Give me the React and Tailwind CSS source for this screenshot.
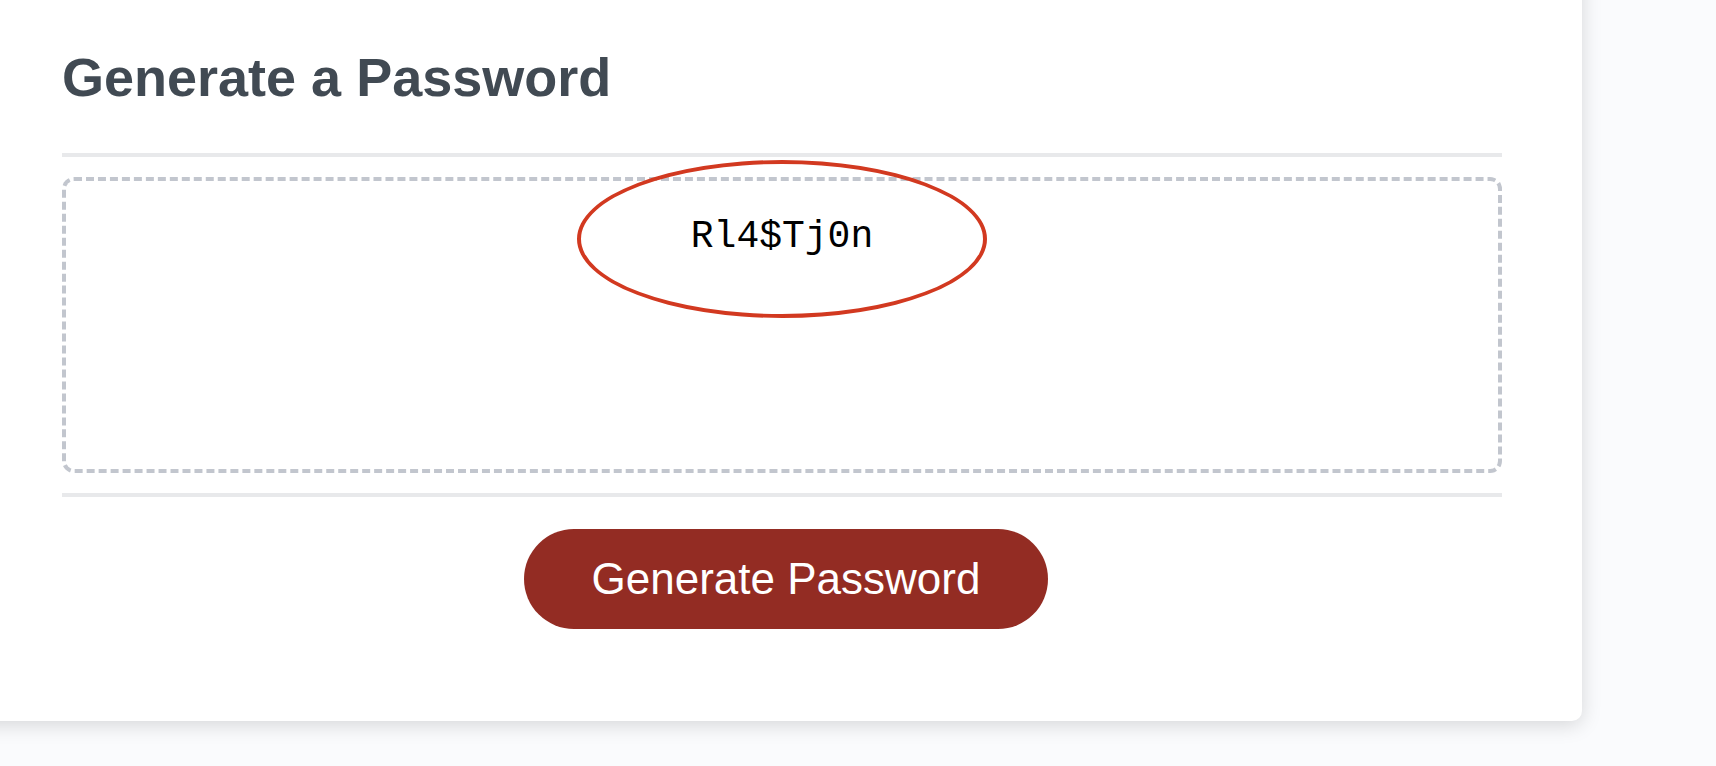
import { useState } from "react";

const LOWER = "abcdefghijklmnopqrstuvwxyz";
const CHARACTERS = LOWER + LOWER.toUpperCase() + "0123456789!$%&*?";

function createPassword(length) {
  const values = crypto.getRandomValues(new Uint32Array(length));
  return Array.from(values, (value) => CHARACTERS[value % CHARACTERS.length]).join("");
}

export default function App() {
  const [password, setPassword] = useState("Rl4$Tj0n");

  return (
    <div className="min-h-screen overflow-hidden bg-[#fafbfd] pb-11 font-['Liberation_Sans',Arial,sans-serif]">
      <main className="-mt-8 -ml-8 mr-[134px] rounded-[10px] bg-white pt-8 pl-8 shadow-[0_4px_20px_rgba(0,0,0,0.15)]">
        <div className="pt-[47px] pr-20 pb-[92px] pl-[62px]">
          <h2 className="text-[54px] leading-[60px] font-bold text-[#414a53]">
            <label htmlFor="password">Generate a Password</label>
          </h2>

          <div className="relative mt-[46px] border-y-4 border-[#e8e9eb] py-5">
            <textarea
              id="password"
              readOnly
              value={password}
              className="block h-[296px] w-full resize-none overflow-hidden rounded-xl border-4 border-dashed border-[#c2c6ce] bg-transparent px-8 py-8 text-center font-['Liberation_Mono','Courier_New',monospace] text-[38px] leading-[48px] text-black outline-none"
            />
            <div className="pointer-events-none absolute top-[3px] left-1/2 h-[158px] w-[410px] -translate-x-1/2 rounded-[50%] border-4 border-[#d23920]" />
          </div>

          <div className="mt-8 flex justify-center pl-2">
            <button
              type="button"
              onClick={() => setPassword(createPassword(8))}
              className="h-[100px] rounded-full bg-[#932c23] px-17 text-[44px] leading-[52px] text-white"
            >
              Generate Password
            </button>
          </div>
        </div>
      </main>
    </div>
  );
}
